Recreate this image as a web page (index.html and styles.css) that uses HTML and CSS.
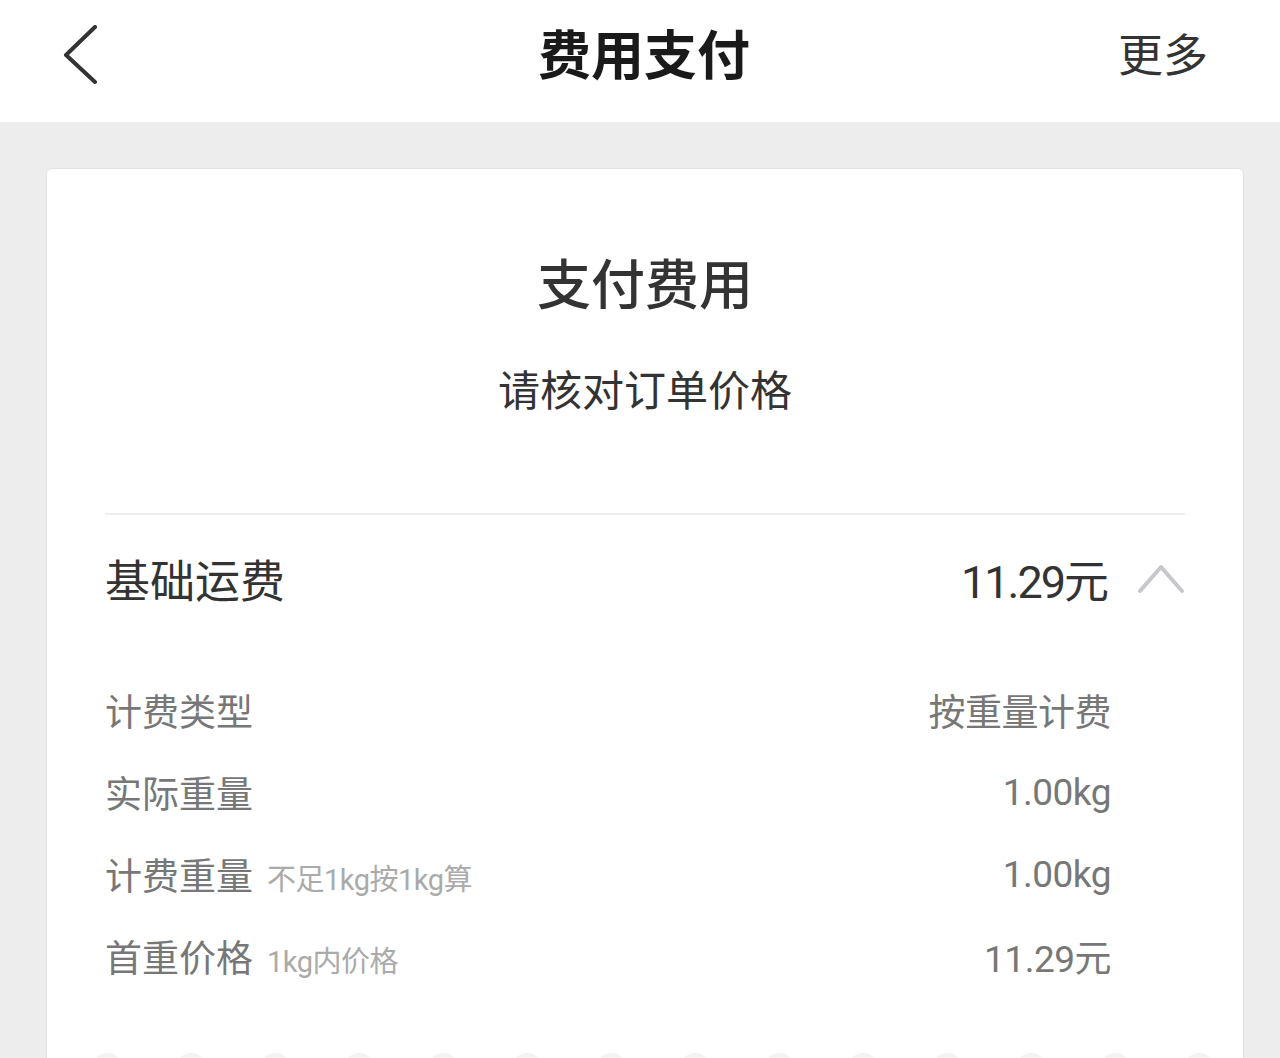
FILE: index.html
```html
<!DOCTYPE html>
<html lang="zh-CN">
<head>
<meta charset="utf-8">
<title>费用支付</title>
<link rel="stylesheet" href="styles.css">
</head>
<body>
<header class="nav">
  <div class="nav-back">
    <svg width="40" height="60" viewBox="0 0 40 60"><polyline points="33,2 4,30 33,57" fill="none" stroke="#333" stroke-width="4" stroke-linecap="round" stroke-linejoin="round"/></svg>
  </div>
  <div class="nav-title">费用支付</div>
  <div class="nav-more">更多</div>
</header>
<main class="page">
  <section class="card">
    <h1 class="card-title">支付费用</h1>
    <p class="card-sub">请核对订单价格</p>
    <div class="divider"></div>
    <div class="main-row">
      <span class="main-label">基础运费</span>
      <span class="main-value">11.29元</span>
      <svg class="chev" width="48" height="32" viewBox="0 0 48 32"><polyline points="3,28 24,4 45,28" fill="none" stroke="#c7c7cc" stroke-width="4" stroke-linecap="round" stroke-linejoin="round"/></svg>
    </div>
    <div class="details">
      <div class="drow"><span class="dlabel">计费类型</span><span class="dvalue">按重量计费</span></div>
      <div class="drow"><span class="dlabel">实际重量</span><span class="dvalue">1.00kg</span></div>
      <div class="drow"><span class="dlabel">计费重量<span class="note">不足1kg按1kg算</span></span><span class="dvalue">1.00kg</span></div>
      <div class="drow"><span class="dlabel">首重价格<span class="note">1kg内价格</span></span><span class="dvalue">11.29元</span></div>
    </div>
    <div class="dots">
      <i></i><i></i><i></i><i></i><i></i><i></i><i></i><i></i><i></i><i></i><i></i><i></i><i></i><i></i>
    </div>
  </section>
</main>
</body>
</html>
```
FILE: styles.css
```css
* { box-sizing: border-box; }
html, body { margin: 0; padding: 0; }
body {
  background: #ededed;
  font-family: "Roboto", "Noto Sans CJK SC", sans-serif;
  color: #333;
  height: 1058px;
  overflow: hidden;
}
.nav {
  height: 122px;
  background: #fff;
  display: flex;
  align-items: center;
  padding: 0 72px 0 62px;
  position: relative;
}
.nav-back { width: 40px; height: 60px; display: flex; margin-top: -12px; }
.nav-title {
  flex: 1;
  text-align: center;
  font-size: 53px;
  font-weight: 700;
  color: #1a1a1a;
  line-height: 60px;
  margin-top: -8px;
  padding-left: 68px;
}
.nav-more {
  font-size: 45px;
  color: #333;
  line-height: 60px;
  margin-top: -8px;
}
.page { padding: 46px 36px 0 46px; }
.card {
  background: #fff;
  border: 1px solid #e2e2e2;
  border-radius: 6px;
  height: 960px;
  padding: 0 58px;
  display: flex;
  flex-direction: column;
  position: relative;
}
.card-title {
  margin: 83px 0 0;
  text-align: center;
  font-size: 54px;
  font-weight: 500;
  line-height: 70px;
  color: #333;
}
.card-sub {
  margin: 42px 0 0;
  text-align: center;
  font-size: 42px;
  line-height: 56px;
  color: #333;
}
.divider {
  margin-top: 93px;
  height: 2px;
  background: #eeeeee;
}
.main-row {
  height: 126px;
  display: flex;
  align-items: center;
}
.main-label { flex: 1; font-size: 45px; color: #333; }
.main-value { font-size: 45px; color: #333; letter-spacing: -2px; }
.chev { margin-left: 30px; margin-top: 2px; }
.details { margin-top: 28px; }
.drow {
  height: 82px;
  display: flex;
  align-items: center;
  justify-content: space-between;
  padding-right: 74px;
}
.dlabel { font-size: 37px; color: #777; display: flex; align-items: baseline; }
.dvalue { font-size: 37px; color: #777; letter-spacing: -0.5px; }
.note { font-size: 29px; color: #aaa; margin-left: 14px; letter-spacing: -0.5px; }
.dots {
  position: absolute;
  left: 45px;
  top: 884px;
  display: flex;
  gap: 54px;
}
.dots i {
  display: block;
  width: 30px;
  height: 30px;
  border-radius: 50%;
  background: #f3f3f3;
}
```
